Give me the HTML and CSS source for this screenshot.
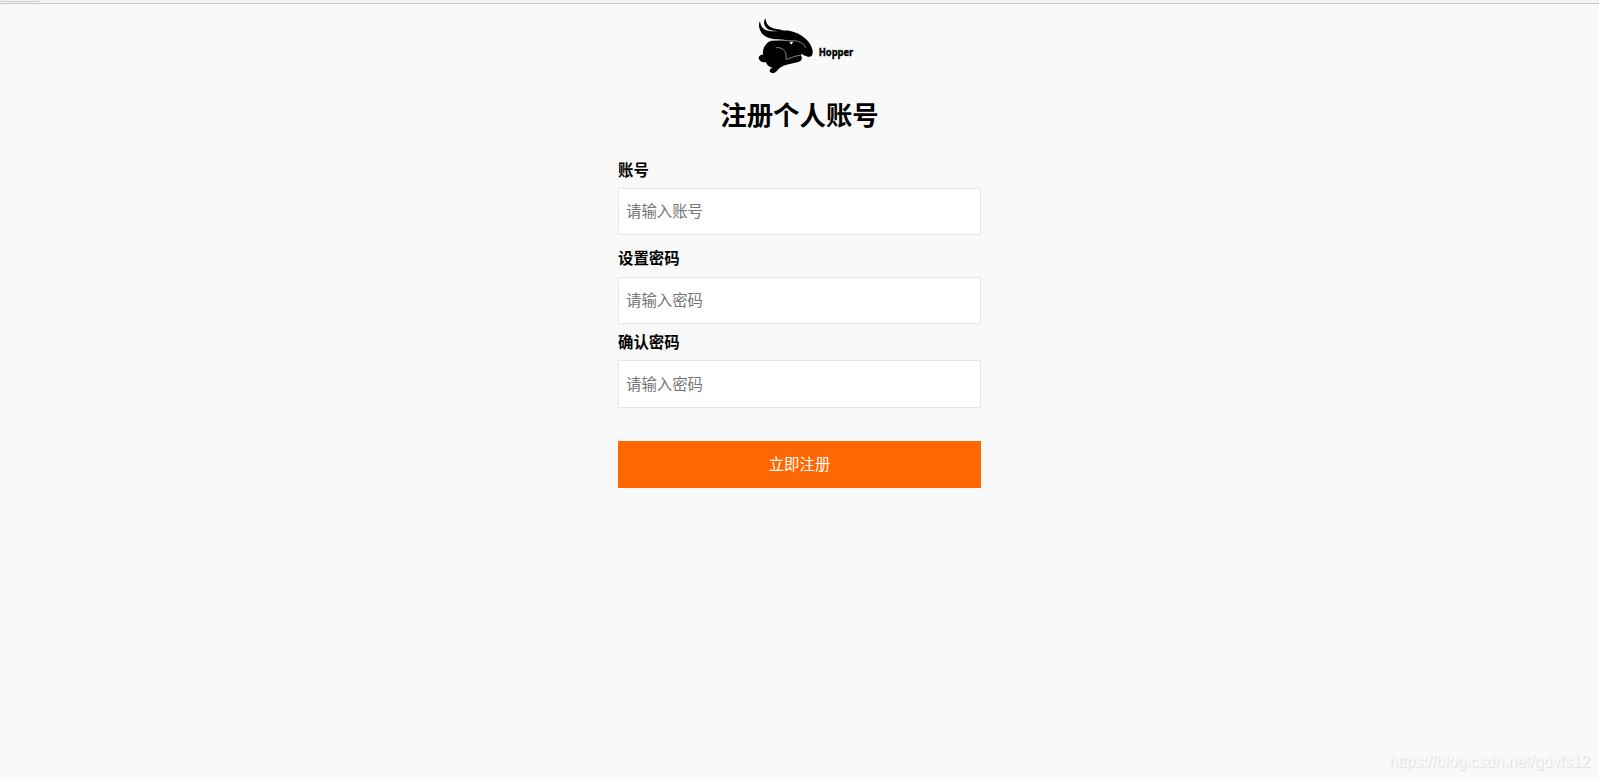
FILE: index.html
```html
<!DOCTYPE html>
<html lang="zh-CN">
<head>
  <meta charset="UTF-8" />
  <meta name="viewport" content="width=device-width, initial-scale=1.0"/>
  <title>注册个人账号</title>
  <link rel="stylesheet" href="styles.css">
</head>
<body>
  <div class="topbar"><div class="tab"></div></div>

  <div class="container">
    <svg class="logo" viewBox="0 0 357 240" role="img" aria-label="Hopper">
      <!-- body, tail and legs -->
      <path d="M94 107 C77 113 67 129 69 149 C59 148 54 155 57 163 C60 170 69 173 77 171 C81 180 87 187 98 188 C89 190 87 198 91 202 C97 207 106 203 111 197 C118 189 126 183 137 180 L175 171 C187 168 188 156 182 151 L200 130 L150 105 Z"/>
      <!-- ears and head -->
      <path d="M77 40 C68 51 72 64 84 73 C95 79 110 78 132 77 C121 73 107 72 98 69 C84 65 77 54 77 40 Z"/>
      <path d="M60 49 C54 58 57 75 68 88 C82 102 104 103 124 104 C153 105 166 115 174 132 C181 144 188 151 203 155 C216 157 219 149 218 137 C214 110 184 84 148 77 C126 74 103 81 89 78 C72 76 62 66 60 49 Z"/>
      <path class="line" d="M94 106 C116 100 139 109 158 107 C176 107 190 114 197 128"/>
      <path class="line" d="M109 128 C125 126 138 137 138 151 L138 163 C149 162 162 152 181 151"/>
      <path class="eye" d="M148 110 L160 110 L154 119 Z"/>
      <text x="236" y="153" textLength="104" lengthAdjust="spacingAndGlyphs">Hopper</text>
    </svg>

    <h2>注册个人账号</h2>

    <form>
      <div class="field field-account">
        <label for="account">账号</label>
        <input type="text" id="account" placeholder="请输入账号">
      </div>
      <div class="field field-password">
        <label for="password">设置密码</label>
        <input type="password" id="password" placeholder="请输入密码">
      </div>
      <div class="field field-confirm">
        <label for="confirm">确认密码</label>
        <input type="password" id="confirm" placeholder="请输入密码">
      </div>
      <button type="button" class="register-btn">立即注册</button>
    </form>
  </div>

  <div class="watermark">https://blog.csdn.net/gdvfs12</div>
</body>
</html>
```
FILE: styles.css
```css
* {
  box-sizing: border-box;
  margin: 0;
  padding: 0;
  font-family: "Liberation Sans", "Noto Sans CJK SC", sans-serif;
}

body {
  background-color: #f9f9f9;
  height: 100vh;
  overflow: hidden;
  position: relative;
}

.topbar {
  height: 4px;
  background: #f2f2f2;
  border-bottom: 1px solid #c8c8c8;
}

.tab {
  width: 38px;
  height: 2px;
  margin-left: 1px;
  border: 1px solid #d0d0d0;
  border-top: none;
}

.container {
  width: 363px;
  margin: 0 auto;
  padding-top: 1px;
}

.logo {
  display: block;
  width: 119px;
  height: 80px;
  margin: 0 auto;
}

.logo .line {
  fill: none;
  stroke: #c4c4c4;
  stroke-width: 2;
}

.logo .eye {
  fill: #f9f9f9;
}

.logo text {
  font-family: "Open Sans", sans-serif;
  font-size: 31px;
  font-weight: 700;
  stroke: #000;
  stroke-width: 1.2;
}

h2 {
  font-size: 26.4px;
  line-height: 38px;
  margin-top: 12px;
  text-align: center;
  color: #000;
}

.field label {
  display: block;
  font-size: 15.4px;
  font-weight: bold;
  line-height: 22px;
  margin-bottom: 7px;
}

.field-account {
  padding-top: 25px;
}

.field-account label {
  margin-bottom: 6px;
}

.field-password {
  padding-top: 13px;
}

.field-confirm {
  padding-top: 8px;
}

.field-confirm label {
  margin-bottom: 6px;
}

input {
  display: block;
  width: 100%;
  height: 47px;
  padding: 0 7px;
  border: 1px solid #e7e7e7;
  background: #fff;
  font-size: 15.4px;
}

.field-confirm input {
  height: 48px;
  padding-top: 1px;
}

input::placeholder {
  color: #757575;
}

.register-btn {
  display: block;
  width: 100%;
  height: 47px;
  margin-top: 33px;
  padding-bottom: 3px;
  border: none;
  background-color: #ff6700;
  color: #fff;
  font-size: 15.4px;
  cursor: pointer;
}

.watermark {
  position: absolute;
  right: 9px;
  bottom: 9px;
  font-size: 15.8px;
  line-height: 18px;
  color: #f9f9f9;
  text-shadow: 1px 1px 1px #dadada;
}
```
